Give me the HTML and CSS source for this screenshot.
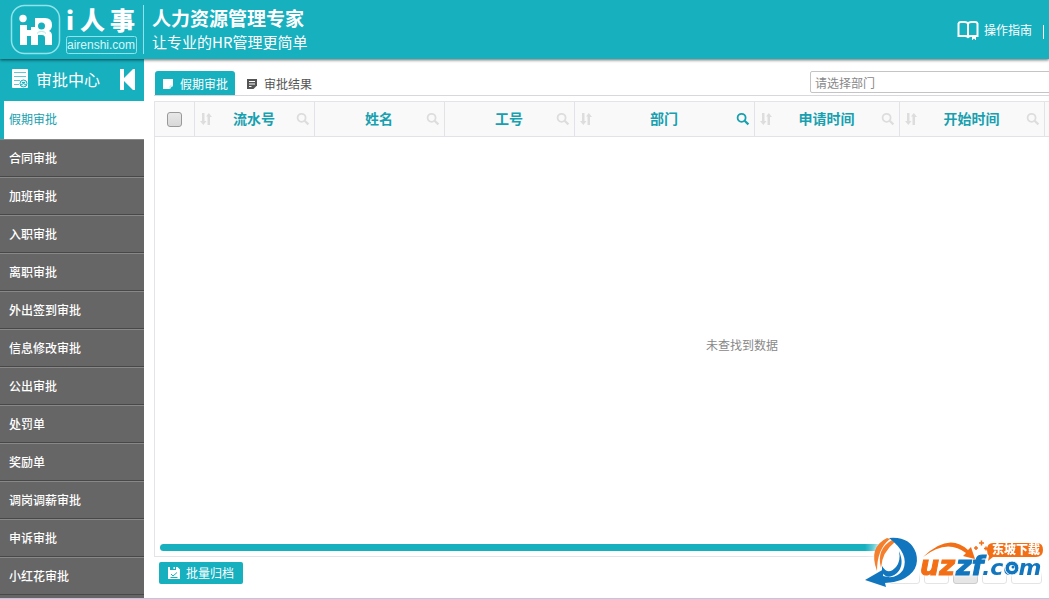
FILE: index.html
```html
<!DOCTYPE html>
<html lang="zh-CN">
<head>
<meta charset="utf-8">
<title>i人事 审批中心</title>
<link rel="stylesheet" href="styles.css">
</head>
<body>
<svg class="defs" aria-hidden="true">
  <symbol id="search" viewBox="0 0 14 14"><circle cx="5.6" cy="5.8" r="4" fill="none" stroke="currentColor" stroke-width="1.8"/><path d="M8.6 8.8 12.4 12.4" stroke="currentColor" stroke-width="2.2"/></symbol>
  <symbol id="sort" viewBox="0 0 12 12"><path d="M2 0h2.500v8h2L3.300 12 0 8h2zM7.500 12H10V4h2L8.800 0 6 3.500h1.500z" fill="currentColor"/></symbol>
</svg>
<header class="top">
  <svg class="brand" viewBox="0 0 144 59" role="img" aria-label="i人事">
    <rect x="11.500" y="5.500" width="48" height="48" rx="13" fill="none" stroke="#8fe3ea" stroke-width="1.500"/>
    <circle cx="23" cy="18.500" r="3.700" fill="#fff"/>
    <path fill="#fff" d="M20 25h7v5h4v-3h4v-9h10q7 0 7 7 0 4-3 6 3 1 3 5v9h-7v-7q0-3-3-3h-4v10h-7v-9h-4v9h-7z"/>
    <circle cx="41.500" cy="26" r="3.500" fill="#17b0bf"/>
    <path d="M37 33.500q1-2 4.500-2t4.500 2" fill="none" stroke="#a9e6eb"/>
    <text class="brand-name" x="66" y="30">i</text>
    <text class="brand-name" x="80" y="30">人</text>
    <text class="brand-name" x="110" y="30">事</text>
    <rect x="66.500" y="36.500" width="70" height="17" rx="2" fill="none" stroke="#8fe3ea"/>
    <text class="brand-url" x="101" y="49" text-anchor="middle">airenshi.com</text>
    <path d="M143.500 5v49" stroke="#8fe3ea"/>
  </svg>
  <div class="slogan"><strong>人力资源管理专家</strong><span>让专业的HR管理更简单</span></div>
  <a class="guide" href="#guide">
    <svg width="22" height="20" viewBox="0 0 22 20"><path d="M1.500 3.500Q2 2 4 2h3.500Q10 2 11 3.500 12 2 14.500 2H18q2 0 2.500 1.500V16H18v2l-1-1-1 1V16h-2q-2 0-3 1-1-1-3-1H1.500zM11 3.500V16" fill="none" stroke="#fff" stroke-width="2"/></svg>
    <span>操作指南</span>
  </a>
  <i class="divider"></i>
</header>
<div class="work">
  <aside class="side">
    <div class="side-title">
      <svg width="17" height="20" viewBox="0 0 17 20"><rect width="16" height="19" rx="1" fill="#fff"/><path d="M2 3.500h12M2 7.500h12M2 11.500h6M2 15.500h5" stroke="#5fc9d3"/><circle cx="11.500" cy="14.500" r="3.500" fill="#d9f3f5" stroke="#17b0bf"/><path d="M9 16q2.500-3 5 0M10 13.500h3" stroke="#17b0bf" fill="none"/></svg>
      <h1>审批中心</h1>
      <button class="collapse" aria-label="收起菜单"><svg width="15" height="21" viewBox="0 0 15 21"><path d="M0 0h4v9L13 0h2v21h-2L4 12v9H0z" fill="#fff"/></svg></button>
    </div>
    <nav>
      <a class="active" href="#a1">假期审批</a>
      <a href="#a2">合同审批</a>
      <a href="#a3">加班审批</a>
      <a href="#a4">入职审批</a>
      <a href="#a5">离职审批</a>
      <a href="#a6">外出签到审批</a>
      <a href="#a7">信息修改审批</a>
      <a href="#a8">公出审批</a>
      <a href="#a9">处罚单</a>
      <a href="#a10">奖励单</a>
      <a href="#a11">调岗调薪审批</a>
      <a href="#a12">申诉审批</a>
      <a href="#a13">小红花审批</a>
    </nav>
  </aside>
  <main class="main">
    <div class="tabs">
      <button class="tab on"><svg width="12" height="12" viewBox="0 0 12 12"><path d="M1 1h10v6.500L7.500 11H1z" fill="#fff"/><path d="M8 11V8h3" fill="none" stroke="#bde9ed"/></svg>假期审批</button>
      <button class="tab"><svg width="12" height="12" viewBox="0 0 12 12"><path d="M1 1h10v6.500L7.500 11H1z" fill="#555"/><path d="M3 3.500h6M3 6h6M3 8.500h2.500" stroke="#fff"/></svg>审批结果</button>
      <input class="dept" type="text" placeholder="请选择部门" aria-label="请选择部门">
    </div>
    <div class="grid">
      <table>
        <colgroup><col class="w40"><col class="w120"><col class="w130"><col class="w130"><col class="w180"><col class="w145"><col class="w145"><col></colgroup>
        <thead><tr>
          <th><input type="checkbox" aria-label="全选"></th>
          <th><div class="cell"><svg class="sort"><use href="#sort"/></svg><span>流水号</span><svg class="find"><use href="#search"/></svg></div></th>
          <th><div class="cell"><i class="sort"></i><span>姓名</span><svg class="find"><use href="#search"/></svg></div></th>
          <th><div class="cell"><i class="sort"></i><span>工号</span><svg class="find"><use href="#search"/></svg></div></th>
          <th><div class="cell"><svg class="sort"><use href="#sort"/></svg><span>部门</span><svg class="find live"><use href="#search"/></svg></div></th>
          <th><div class="cell"><svg class="sort"><use href="#sort"/></svg><span>申请时间</span><svg class="find"><use href="#search"/></svg></div></th>
          <th><div class="cell"><svg class="sort"><use href="#sort"/></svg><span>开始时间</span><svg class="find"><use href="#search"/></svg></div></th>
          <th></th>
        </tr></thead>
        <tbody><tr><td colspan="8">未查找到数据</td></tr></tbody>
      </table>
      <div class="scroll"></div>
    </div>
    <div class="foot">
      <button class="archive"><svg width="12" height="12" viewBox="0 0 12 12"><path d="M0 0h2v3h6V0h1.500L12 2.500V12H0z" fill="#fff"/><path d="M5.500 0h1.500v2H5.500z" fill="#fff"/><path d="M2.500 10.500h7M3 7l2 2 4-3.500" fill="none" stroke="#17b0bf"/></svg>批量归档</button>
      <div class="pager"><i></i><i></i><i class="now"></i><i></i><i></i></div>
    </div>
  </main>
</div>
<svg class="mark" viewBox="0 0 189 64" role="img" aria-label="uzzf.com 东坡下载">
  <defs>
    <filter id="glow" x="-10%" y="-20%" width="120%" height="140%"><feGaussianBlur stdDeviation="2"/></filter>
    <linearGradient id="fade"><stop offset="0" stop-color="#fff" stop-opacity="0"/><stop offset="1" stop-color="#fff"/></linearGradient>
  </defs>
  <rect x="0" y="8" width="24" height="20" fill="url(#fade)"/>
  <path d="M20 8H186V46H60L20 52Q0 26 20 8z" fill="#fff" filter="url(#glow)"/>
  <path d="M22 9Q3 18 12 42 12 20 25 10zM27 11Q11 20 16 39 17 23 30 13z" fill="#f4802d"/>
  <path d="M24 9Q45 7 51 24 56 42 36 51 28 54 20 54l1 4L0 51 19 40l-1 7q13 4 20-6 7-16-14-32z" fill="#1176bd"/>
  <path d="M17 37q6 10 14 1 5-6 3-16 6 14-2 22-10 8-15-1z" fill="#1176bd"/>
  <path d="M58 28Q84 3 103 21l3-3 4 12-12-3 3-3Q82 9 58 28z" fill="#f36f16"/>
  <g class="mark-word">
    <text x="55" y="46" fill="#f36f16" stroke="#f36f16">uz</text><text x="91" y="46" fill="#1176bd" stroke="#1176bd">zf</text>
  </g>
  <path d="M128 14h44q6 0 6 7 0 7-7 7h-43l-5 4 1-5q-2-2-2-6 0-7 6-7z" fill="#f36f16"/>
  <text class="mark-tag" x="127" y="25">东坡下载</text>
  <text class="mark-com" x="117" y="46">.com</text>
  <circle cx="147" cy="39" r="7" fill="#1176bd" stroke="#fff"/><circle cx="147" cy="39" r="3" fill="#fff"/><circle cx="148" cy="38" r="1.500" fill="#1176bd"/>
  <path d="M109 19h4m-2-2v4m3-7h5m-2.500-2.500v5m2.500 3h4m-2-2v4" stroke="#f36f16" stroke-width="1.500"/>
</svg>
</body>
</html>
```

FILE: styles.css
```css
* { box-sizing: border-box; }
body {
  margin: 0; height: 100vh; overflow: hidden;
  display: flex; flex-direction: column;
  border-bottom: 1px solid #b9c9e2;
  background: #fff; color: #666;
  font: 12px/18px "Noto Sans CJK SC", sans-serif;
}
button, input { font: inherit; }
button { border: 0; padding: 0; cursor: pointer; }
a { text-decoration: none; color: inherit; }
.defs { position: absolute; width: 0; height: 0; }

.top {
  position: relative; z-index: 1; flex: none; height: 59px;
  display: flex; align-items: center;
  background: #17b0bf; color: #fff;
  box-shadow: 0 1px 3px rgba(0, 0, 0, .6);
}
.brand { width: 144px; height: 59px; flex: none; }
.brand-name { font: 900 25px "Noto Sans CJK SC", sans-serif; fill: #fff; }
.brand-url { font: 12px "Liberation Sans", sans-serif; fill: #d8f7f9; }
.slogan { display: flex; flex-direction: column; padding-left: 8px; }
.slogan strong { font-size: 19px; line-height: 24px; }
.slogan span { font-size: 15px; line-height: 24px; }
.guide { display: flex; align-items: center; gap: 5px; margin-left: auto; }
.divider { width: 1px; height: 14px; margin: 4px 5px 0 11px; background: #fff; }

.work { flex: 1; min-height: 0; display: flex; }
.side { width: 144px; flex: none; background: #666; color: #fff; overflow: hidden; }
.side-title {
  height: 42px; padding: 0 9px 2px 12px;
  display: flex; align-items: center; background: #17b0bf;
}
.side-title h1 { flex: 1; margin: 0; padding-left: 7px; font-size: 16px; font-weight: 400; }
.collapse { background: none; display: flex; }
.side nav a {
  display: block; height: 38px; padding-left: 9px; line-height: 36px; font-weight: 500;
  border-top: 1px solid #888; border-bottom: 1px solid #484848;
}
.side nav a.active {
  padding-left: 5px; border: 0; border-left: 4px solid #17b0bf;
  background: #fff; color: #17a0b0; font-weight: 400;
}

.main { flex: 1; min-width: 0; display: flex; flex-direction: column; padding: 12px 0 0 10px; }
.tabs { display: flex; height: 25px; flex: none; border-bottom: 1px solid #d8d8dc; overflow: hidden; }
.tab { display: flex; align-items: center; gap: 6px; height: 25px; padding: 1px 7px 0; margin-right: 4px; background: none; color: #555; }
.tab.on { margin-left: 1px; border-radius: 3px 3px 0 0; background: #17b0bf; color: #fff; }
.dept {
  flex: none; width: 251px; height: 22px; margin: 0 -12px 0 auto; padding: 0 4px;
  border: 1px solid #c4c4c4; border-radius: 2px; background: #fff;
}
.dept::placeholder { color: #888; opacity: 1; }

.grid {
  flex: 1; min-height: 0; margin-top: 5px; overflow: hidden;
  display: flex; flex-direction: column;
  border: 1px solid #e4e4e8; border-right: 0;
}
table { flex: 1; display: table; width: 1174px; height: 100%; table-layout: fixed; border-collapse: separate; border-spacing: 0; }
.w40 { width: 40px; } .w120 { width: 120px; } .w130 { width: 130px; }
.w145 { width: 145px; } .w180 { width: 180px; }
th { height: 35px; padding: 0; border-right: 1px solid #e2e2e8; border-bottom: 1px solid #e2e2e8; background: #f9f9f9; }
td { padding: 8px 0 0; text-align: center; color: #888; }
.cell { display: flex; align-items: center; justify-content: space-between; padding: 0 4px 0 5px; color: #17a0b0; font-size: 14px; line-height: 20px; }
.cell span { padding-bottom: 3px; }
.sort { width: 12px; height: 12px; color: #ddd; }
.find { width: 14px; height: 14px; color: #ddd; }
.find.live { color: #17a0b0; }
th input {
  appearance: none; display: block; width: 15px; height: 15px; margin: 1px auto 0;
  border: 1px solid #999; border-radius: 3px; background: linear-gradient(#e8e8e8, #d8d8d8);
}
.scroll { flex: none; height: 7px; margin: 0 5px 5px; border-radius: 4px; background: #17b0bf; }
.foot { flex: none; height: 41px; padding: 5px 7px 0 5px; display: flex; justify-content: space-between; }
.archive {
  display: flex; align-items: center; gap: 6px; height: 22px; padding: 0 9px;
  border-radius: 2px; background: #17b0bf; color: #fff;
}
.pager { display: flex; gap: 4px; }
.pager i { width: 25px; height: 22px; border: 1px solid #e4e4e4; border-radius: 3px; background: #fff; }
.pager i:first-child, .pager i:last-child { width: 31px; }
.pager .now { border-color: #ccc; background: #e6e6e6; }

.mark { position: fixed; right: -5px; bottom: 6px; width: 189px; height: 64px; pointer-events: none; }
.mark-word { font: italic bold 27px "DejaVu Sans", sans-serif; stroke-width: 1px; }
.mark-com { font: italic bold 22px "DejaVu Sans", sans-serif; fill: #1176bd; }
.mark-tag { font: 900 12px "Noto Sans CJK SC", sans-serif; fill: #fff; }
```
